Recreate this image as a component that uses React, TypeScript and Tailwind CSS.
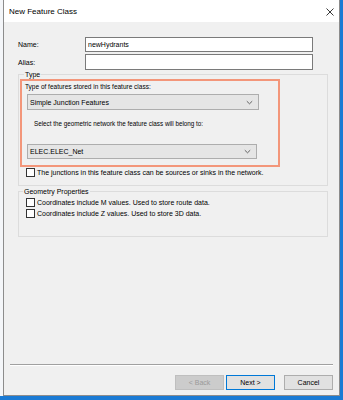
import React from "react";

const font = { fontFamily: '"Liberation Sans", Arial, sans-serif' };

function Chevron() {
  return (
    <svg width="7" height="5" viewBox="0 0 7 5" className="shrink-0">
      <path d="M0.8 1.2 L3.5 3.8 L6.2 1.2" fill="none" stroke="#555" strokeWidth="0.9" />
    </svg>
  );
}

function Combo({ value, width, height }: { value: string; width: string; height: string }) {
  return (
    <div className={`flex items-center justify-between border border-[#adadad] bg-[#e5e5e5] pl-[2px] pr-[5px] ${width} ${height}`}>
      <span className="text-[7px] leading-[9px] text-black">{value}</span>
      <Chevron />
    </div>
  );
}

function Check({ label }: { label: string }) {
  return (
    <div className="flex items-center h-[9px]">
      <div className="w-[9px] h-[9px] border border-[#333] bg-white shrink-0" />
      <span className="ml-[2px] text-[7px] leading-[9px] text-black whitespace-nowrap">{label}</span>
    </div>
  );
}

function Button({ label, kind }: { label: string; kind: "disabled" | "default" | "normal" }) {
  const cls =
    kind === "disabled"
      ? "border border-[#bfbfbf] bg-[#cccccc] text-[#9a9a9a]"
      : kind === "default"
      ? "border-[1.5px] border-[#0078d7] bg-[#e1e1e1] text-black"
      : "border border-[#adadad] bg-[#e1e1e1] text-black";
  return (
    <div className={`flex items-center justify-center h-[15px] w-[49px] text-[7px] leading-[9px] ${cls}`}>
      {label}
    </div>
  );
}

export default function App() {
  return (
    <div className="w-[343px] h-[400px] bg-[#1a7ad4] overflow-hidden flex" style={font}>
      <div className="w-[3px] h-[396px] bg-[#f4f6f9] shrink-0" />
      {/* dialog */}
      <div className="w-[337px] h-[396px] flex flex-col border-x border-b border-[#8c8c8c] bg-[#f0f0f0] shrink-0">
        {/* title bar */}
        <div className="h-[22px] bg-white flex items-center justify-between pl-[5px] pr-[5px]">
          <span className="text-[8px] leading-[10px] text-black mt-[2px]">New Feature Class</span>
          <svg width="8" height="8" viewBox="0 0 8 8" className="mt-[2px]">
            <path d="M0.5 0.5 L7.5 7.5 M7.5 0.5 L0.5 7.5" stroke="#222" strokeWidth="0.9" />
          </svg>
        </div>

        {/* body */}
        <div className="flex-1 flex flex-col pl-[14px] pt-[15px]">
          <div className="flex items-center h-[15px]">
            <span className="w-[67px] text-[7px] leading-[9px] text-black">Name:</span>
            <div className="w-[228px] h-[15px] border border-[#7a7a7a] bg-white flex items-center pl-[2px] text-[7px] leading-[9px] text-black">
              newHydrants
            </div>
          </div>
          <div className="flex items-center h-[16px] mt-[2px]">
            <span className="w-[67px] text-[7px] leading-[9px] text-black">Alias:</span>
            <div className="w-[228px] h-[16px] border border-[#7a7a7a] bg-white" />
          </div>

          {/* Type group */}
          <fieldset className="w-[310px] h-[116px] border border-[#dcdcdc] mt-0">
            <legend className="ml-[5px] px-[1px] text-[7px] leading-[9px] text-black">Type</legend>
            <div className="ml-[1px] w-[260px] h-[88px] border-2 border-[#f3967a] flex flex-col pl-[3px]">
              <span className="mt-[1px] text-[6.5px] leading-[9px] text-black">Type of features stored in this feature class:</span>
              <div className="ml-[2px] mt-[3px]">
                <Combo value="Simple Junction Features" width="w-[232px]" height="h-[16px]" />
              </div>
              <span className="ml-[9px] mt-[9px] text-[6.3px] leading-[9px] text-black">
                Select the geometric network the feature class will belong to:
              </span>
              <div className="ml-[2px] mt-[16px]">
                <Combo value="ELEC.ELEC_Net" width="w-[230px]" height="h-[15px]" />
              </div>
            </div>
            <div className="ml-[7px] mt-[1px]">
              <Check label="The junctions in this feature class can be sources or sinks in the network." />
            </div>
          </fieldset>

          {/* Geometry group */}
          <fieldset className="w-[310px] h-[50px] border border-[#dcdcdc] mt-[1px]">
            <legend className="ml-[4px] px-[1px] text-[7px] leading-[9px] text-black">Geometry Properties</legend>
            <div className="ml-[7px] mt-[2px] flex flex-col gap-[2px]">
              <Check label="Coordinates include M values. Used to store route data." />
              <Check label="Coordinates include Z values. Used to store 3D data." />
            </div>
          </fieldset>
        </div>

        {/* footer */}
        <div className="flex flex-col px-[6px] pb-[5px]">
          <div className="h-[2px] border-t border-[#a0a0a0] border-b border-b-white" />
          <div className="flex justify-end mt-[9px]">
            <Button label="< Back" kind="disabled" />
            <div className="ml-[2px]">
              <Button label="Next >" kind="default" />
            </div>
            <div className="ml-[9px]">
              <Button label="Cancel" kind="normal" />
            </div>
          </div>
        </div>
      </div>
      <div className="flex-1 h-full bg-[#1a7ad4]" />
    </div>
  );
}
